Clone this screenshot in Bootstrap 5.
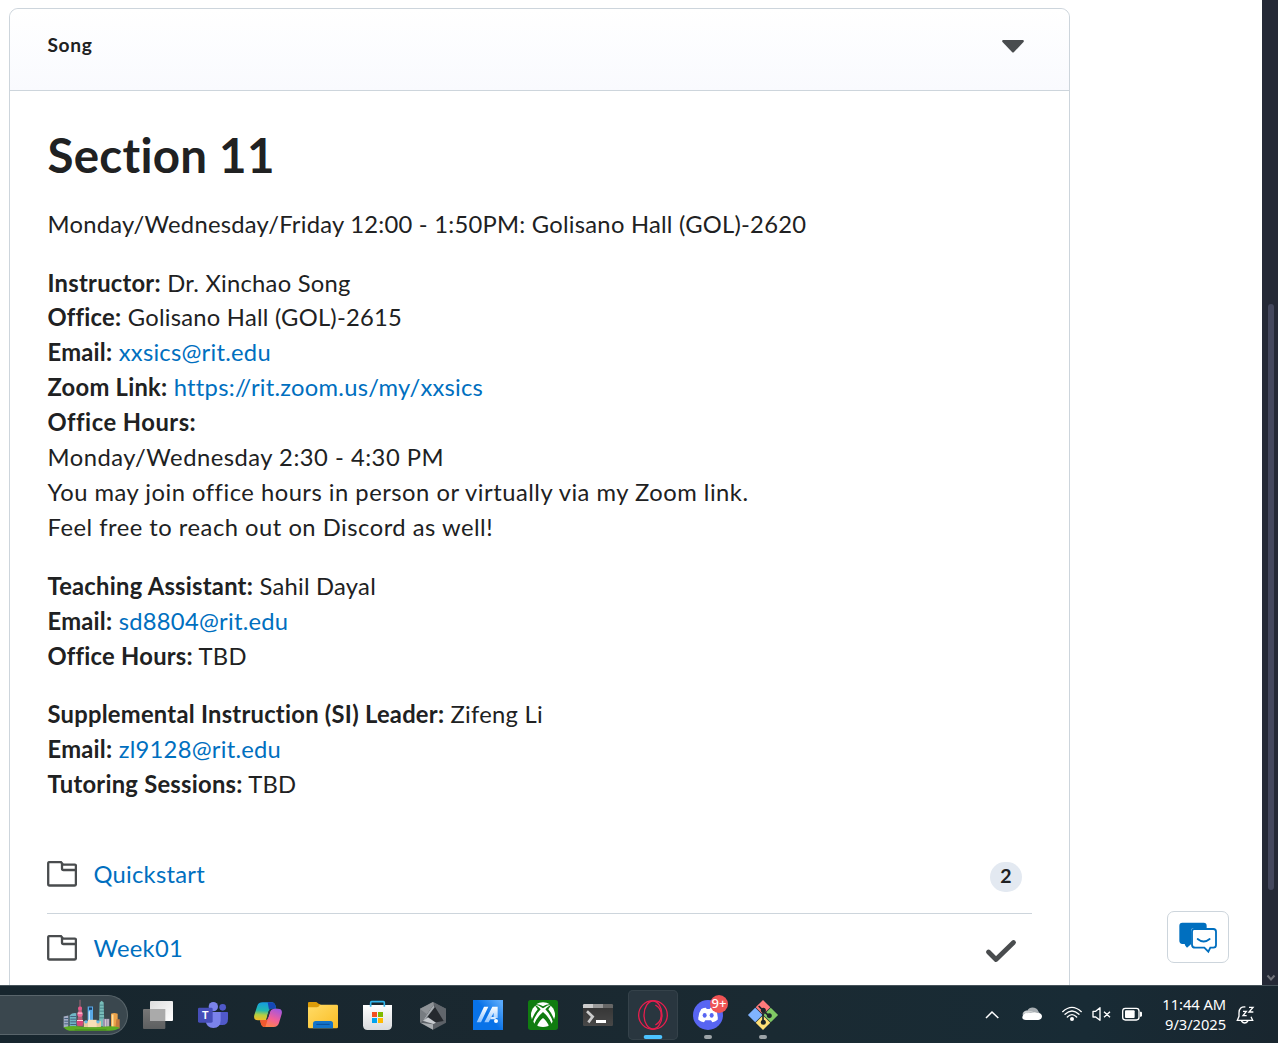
<!DOCTYPE html>
<html lang="en">
<head>
<meta charset="utf-8">
<title>Song - Section 11</title>
<link href="https://cdn.jsdelivr.net/npm/bootstrap@5.3.0/dist/css/bootstrap.min.css" rel="stylesheet">
<style>
body{width:1278px;height:1043px;overflow:hidden;background:#fff;font-family:Lato,"Open Sans",sans-serif;color:#202122}
a{color:#006fbf;text-decoration:none}
svg{display:block;flex:none}
.stage{height:985px;overflow:hidden}
.module{width:1061px;height:1100px;margin:8px 0 0 9px;border:1px solid #cdd5dc;border-radius:9px}
.module-head{height:82px;border-bottom:1px solid #cdd5dc;border-radius:9px 9px 0 0;background:linear-gradient(#fff,#f9fafe);padding:20px 45px 0 37.5px}
.module-title{font-size:19.2px;line-height:32px;font-weight:700;letter-spacing:.6px;margin:0}
.module-body{padding:34.3px 37px 0 37.5px;font-size:23.75px;line-height:34.9px;letter-spacing:.25px}
.module-body h1{font-size:47.5px;line-height:60px;font-weight:700;letter-spacing:.25px;margin:0 0 21.3px}
.module-body p{margin:0 0 24px}
.module-body b{font-weight:700}
.hours{letter-spacing:.505px}
.topics{margin-left:-1px;padding-top:12.8px}
.topic{height:74px;padding:0 10px 4px 0}
.topic+.topic{border-top:1px solid #cdd5dc}
.topic a{margin-left:17px}
.count{width:32px;height:30px;margin-top:6px;border-radius:15px;background:#e3e9f1;font-size:19.5px;font-weight:700;line-height:28px;text-align:center}
.tick{margin:6px 5px 0 0}
.chat{width:62px;height:52px;border:1px solid #cdd5dc;border-radius:7px;margin:0 33px 22px 0;padding-top:2px;background:#fff}
.rail{width:16px;background:#252936;padding-top:304px}
.thumb{width:6px;height:586px;margin-left:6px;border-radius:3px;background:#44475d}
.taskbar{height:58px;background:linear-gradient(90deg,#17262e,#1a2830 40%,#1a2a32 60%,#182b35 85%,#19262f);border-top:1px solid #46535a;color:#fff;font-family:"Noto Sans","Open Sans",sans-serif}
.searchpill{width:128px;height:40px;margin-top:9px;border-radius:0 20px 20px 0;border:1px solid #59656b;border-left:0;background:#3a474e;padding-right:6px}
.apps{gap:5px;margin:4px 0 0 5px}
.tile{width:50px;height:50px;border-radius:5px}
.tile.on{background:#29363f;box-shadow:inset 0 0 0 1px #35424a}
.tray{margin:-2px -10px 0 0}
.clock{width:64px;margin-left:4px;padding-top:8px;font-size:14.7px;line-height:20px;text-align:right;letter-spacing:-.05px;white-space:nowrap}
.bell{margin:-1px 23px 0 9px}
</style>
</head>
<body class="d-flex flex-column">
<main class="stage d-flex">
  <section class="module flex-shrink-0">
    <div class="module-head d-flex justify-content-between">
      <h2 class="module-title">Song</h2>
      <svg width="22" height="13" viewBox="0 0 22 13" style="margin-top:11px"><path d="M1 0H21Q22.5 .5 21.5 2L12 12Q11 13 10 12L.5 2Q-.5 .5 1 0Z" fill="#494c4e"/></svg>
    </div>
    <div class="module-body">
      <h1>Section 11</h1>
      <p>Monday/Wednesday/Friday 12:00 - 1:50PM: Golisano Hall (GOL)-2620</p>
      <p><b>Instructor:</b> Dr. Xinchao Song<br><b>Office:</b> Golisano Hall (GOL)-2615<br><b>Email:</b> <a href="#">xxsics@rit.edu</a><br><b>Zoom Link:</b> <a href="#">https://rit.zoom.us/my/xxsics</a><br><span class="hours"><b>Office Hours:</b><br>Monday/Wednesday 2:30 - 4:30 PM<br>You may join office hours in person or virtually via my Zoom link.<br>Feel free to reach out on Discord as well!</span></p>
      <p><b>Teaching Assistant:</b> Sahil Dayal<br><b>Email:</b> <a href="#">sd8804@rit.edu</a><br><b>Office Hours:</b> TBD</p>
      <p><b>Supplemental Instruction (SI) Leader:</b> Zifeng Li<br><b>Email:</b> <a href="#">zl9128@rit.edu</a><br><b>Tutoring Sessions:</b> TBD</p>
      <div class="topics">
        <div class="topic d-flex align-items-center">
          <svg width="30" height="26" viewBox="0 0 30 26" fill="none" stroke="#494c4e" stroke-width="2.3"><path d="M2 1.2H14L16 3.6H28Q28.9 3.6 28.9 4.6V23Q28.9 24.5 27.5 24.5H2.5Q1.2 24.5 1.2 23V2.2Q1.2 1.2 2 1.2ZM15 3V7.5Q15 9 16.5 9H28.8"/></svg>
          <a href="#">Quickstart</a><span class="count ms-auto">2</span>
        </div>
        <div class="topic d-flex align-items-center">
          <svg width="30" height="26" viewBox="0 0 30 26" fill="none" stroke="#494c4e" stroke-width="2.3"><path d="M2 1.2H14L16 3.6H28Q28.9 3.6 28.9 4.6V23Q28.9 24.5 27.5 24.5H2.5Q1.2 24.5 1.2 23V2.2Q1.2 1.2 2 1.2ZM15 3V7.5Q15 9 16.5 9H28.8"/></svg>
          <a href="#">Week01</a>
          <svg class="tick ms-auto" width="32" height="24" viewBox="0 0 32 24" fill="none" stroke="#494c4e" stroke-width="4.8" stroke-linecap="round" stroke-linejoin="round"><path d="M3.5 13L11 20.5L28.5 3.5"/></svg>
        </div>
      </div>
    </div>
  </section>
  <div class="chat d-flex align-items-center justify-content-center ms-auto align-self-end flex-shrink-0">
    <svg width="38" height="32" viewBox="87 97 114 96"><path d="M97 99H161Q170 99 170 108V115H132Q123 115 123 124V164L111 174L106 168L104 163H97Q88 162 88 153V108Q88 99 97 99Z" fill="#006fbf"/><path d="M132 118H190Q198 118 198 126V166Q198 174 190 174H181L175 186L163 174H136Q126 174 126 165V126Q126 118 132 118Z" fill="#fff" stroke="#006fbf" stroke-width="5.5"/><path d="M143 148Q161 163 179 148" fill="none" stroke="#006fbf" stroke-width="5.5" stroke-linecap="round"/></svg>
  </div>
  <div class="rail d-flex flex-column flex-shrink-0"><div class="thumb"></div>
    <svg width="10" height="8" viewBox="0 0 10 8" style="margin:84px 0 0 4px" fill="none" stroke="#71727a" stroke-width="2"><path d="M1.5 1.5L5 5.5L8.500 1.5"/></svg></div>
</main>
<footer class="taskbar d-flex flex-shrink-0">
  <div class="searchpill d-flex align-items-center justify-content-end flex-shrink-0">
    <svg width="58" height="33" viewBox="190 48 174 98">
      <path d="M192 100L206 97V133H192Z" fill="#a5adc4"/><path d="M210 96Q218 88 230 90V133H210Z" fill="#70b5c4"/><path d="M194 106H206M194 114H206M194 122H206M212 100H229M212 108H229M212 116H229M212 124H229" stroke="#45617f" stroke-width="3"/>
      <path d="M264 70H280V118H264Z" fill="#59a9e8"/><path d="M268 73H277V80H268Z" fill="#173e67"/><path d="M269 84V112" stroke="#c1e4f6" stroke-width="4"/>
      <path d="M300 58L306 53L312 58L314 130H298Z" fill="#78bdb9"/><path d="M300 66H312M300 75H313M299 84H313M299 94H313M299 104H313" stroke="#366c79" stroke-width="2"/>
      <path d="M310 107H329V132H310Z" fill="#9b91b0"/><path d="M318 108V132M325 108V132" stroke="#ded1d5" stroke-width="3"/>
      <path d="M334 92Q343 87 354 92V135H334Z" fill="#eba249"/><path d="M339 94V134" stroke="#ffdf9c" stroke-width="5"/><path d="M350 108H360V136H347Z" fill="#c67a3d"/>
      <path d="M241 50V75" stroke="#a36777" stroke-width="3"/><path d="M237 71H246L250 130H232Z" fill="#ad6174"/><circle cx="241" cy="76" r="6" fill="#e8588b"/><circle cx="241" cy="93" r="8" fill="#f0679a"/><circle cx="241" cy="118" r="10" fill="#d84779"/><path d="M232 112H250M234 90H248" stroke="#ffd3da" stroke-width="3"/>
      <path d="M252 114H304V133H252Z" fill="#e9c99f"/><path d="M265 110H291V132H265Z" fill="#f8dfb8"/><circle cx="259" cy="116" r="5" fill="#62bbe8"/><circle cx="295" cy="116" r="5" fill="#62bbe8"/>
      <path d="M192 132Q220 125 247 131Q278 134 305 131Q337 126 360 133Q350 143 328 143H218Q199 143 192 132Z" fill="#5cad23"/><path d="M225 140H320" stroke="#397e1b" stroke-width="2"/>
    </svg>
  </div>
  <div class="apps d-flex">
    <svg class="tile" viewBox="0 0 150 150"><defs><linearGradient id="tg" x2="0" y2="1"><stop stop-color="#777"/><stop offset="1" stop-color="#5d5f60"/></linearGradient><linearGradient id="tw" x2="1" y2="1"><stop stop-color="#ddd"/><stop offset="1" stop-color="#fff"/></linearGradient></defs><rect x="30" y="57" width="67" height="60" rx="3" fill="url(#tg)"/><rect x="51" y="33" width="69" height="60" rx="3" fill="url(#tw)"/><path d="M51 57H97V93H51Z" fill="#aaa"/></svg>
    <svg class="tile" viewBox="0 0 150 150"><circle cx="76" cy="50" r="14" fill="#7b83eb"/><circle cx="104" cy="52" r="10" fill="#5059c9"/><path d="M82 66H118Q120 66 120 69V87Q120 106 101 105H82Z" fill="#5059c9"/><path d="M53 66H98V91Q98 114 76 114Q56 114 53 94Z" fill="#7b83eb"/><rect x="30" y="53" width="44" height="45" rx="4" fill="#464eb8"/><text x="52" y="87" text-anchor="middle" font-family="Liberation Sans" font-weight="700" font-size="32" fill="#fff">T</text></svg>
    <svg class="tile" viewBox="0 0 150 150"><defs><linearGradient id="ca" x1=".4" x2=".3" y2="1"><stop stop-color="#169be0"/><stop offset=".45" stop-color="#22b9ae"/><stop offset=".7" stop-color="#b4cf42"/><stop offset="1" stop-color="#f4bd26"/></linearGradient><linearGradient id="cb" x1=".7" x2=".2" y2="1"><stop stop-color="#a657dc"/><stop offset=".5" stop-color="#f25f99"/><stop offset="1" stop-color="#ff8b39"/></linearGradient></defs><path d="M59 37H86Q94 37 97 46L100 56H87Q79 56 76 66L70 91H45Q30 91 34 75L43 47Q47 37 59 37Z" fill="url(#ca)"/><path d="M74 37H86Q94 37 97 46L100 56H87Q79 56 78 59Z" fill="#1747b5"/><path d="M95 56H104Q120 56 116 72L108 99Q104 111 92 111H66Q57 111 54 101L51 91H65Q73 91 76 81L82 63Q85 56 95 56Z" fill="url(#cb)"/><path d="M51 91H65Q73 91 75 85L67 111Q57 111 54 101Z" fill="#ef592f"/><path d="M76 66Q79 56 87 56H96Q85 56 82 63L76 81Q73 91 69 91Z" fill="#263646"/></svg>
    <svg class="tile" viewBox="0 0 150 150"><defs><linearGradient id="ef" x2="1" y2="1"><stop stop-color="#ffdc68"/><stop offset="1" stop-color="#fbbd24"/></linearGradient></defs><path d="M33 36H55L63 42H67V65H30V40Q30 36 33 36Z" fill="#db9c09"/><path d="M30 52H57Q62 52 65 46L67 44H116Q120 44 120 48V111Q120 115 116 115H34Q30 115 30 111Z" fill="url(#ef)"/><path d="M45 115V101Q45 93 53 93H98Q105 93 105 101V115Z" fill="#1474c9"/><path d="M55 103H95" stroke="#0a4c95" stroke-width="3"/></svg>
    <svg class="tile" viewBox="0 0 150 150"><defs><linearGradient id="sw" x2="0" y2="1"><stop stop-color="#fff"/><stop offset="1" stop-color="#d9dbdd"/></linearGradient></defs><path d="M30 45H117V106Q117 120 103 120H44Q30 120 30 106Z" fill="url(#sw)"/><path d="M53 50V38Q53 35 56 35H91Q94 35 94 38V50" fill="none" stroke="#31b6ed" stroke-width="5"/><path d="M57 66H72V81H57Z" fill="#f25022"/><path d="M75 66H90V81H75Z" fill="#7fba00"/><path d="M57 84H72V99H57Z" fill="#00a4ef"/><path d="M75 84H90V99H75Z" fill="#ffb900"/></svg>
    <svg class="tile" viewBox="0 0 150 150"><path d="M75 36L114 56V98L75 119L36 98V56Z" fill="#5c6167"/><path d="M75 36L114 56V88L106 92L77 44Z" fill="#61666c"/><path d="M36 56L75 36L78 43L43 94Z" fill="#8f9397"/><path d="M36 57L56 72L40 97L36 96Z" fill="#777c81"/><path d="M77 44L107 93L76 98L44 92Z" fill="#25292e"/><path d="M44 92L60 82L84 98L76 102Z" fill="#c7cbcf"/><path d="M77 44L72 51L44 92L50 91L80 52Z" fill="#a4a9ae"/><path d="M38 98L75 103V119Z" fill="#a8adb1"/></svg>
    <svg class="tile" viewBox="0 0 150 150"><defs><linearGradient id="ar" x1="0" x2="1" y2=".2" y1="1"><stop offset=".55" stop-color="#0872e8"/><stop offset="1" stop-color="#58a8fa"/></linearGradient><linearGradient id="as" x2="0" y2="1"><stop stop-color="#fff"/><stop offset="1" stop-color="#8cc2ff"/></linearGradient></defs><path d="M30 30H120V120H30Z" fill="url(#ar)"/><path d="M63 50H76L54 97H41ZM88 50H104V84H92V68L77 97H64Z" fill="url(#as)"/><path d="M85 81H98V88H81Z" fill="#d8ebff"/><circle cx="99" cy="93" r="6" fill="#fff"/></svg>
    <svg class="tile" viewBox="0 0 150 150"><rect x="30" y="30" width="90" height="90" rx="8" fill="#107c10"/><circle cx="75" cy="75" r="36" fill="#fff"/><path d="M51 45Q61 44 75 55Q89 44 99 45L92 38H58ZM75 66Q58 80 49 101L56 110Q64 92 75 84Q86 92 94 110L101 101Q92 80 75 66ZM50 45Q57 46 68 58Q50 76 45 98L39 96Q46 73 59 58ZM100 45Q93 46 82 58Q100 76 105 98L111 96Q104 73 91 58Z" fill="#107c10"/><path d="M54 43Q64 42 75 49Q86 42 96 43Q86 37 75 37Q64 37 54 43Z" fill="#fff"/></svg>
    <svg class="tile" viewBox="0 0 150 150"><defs><linearGradient id="tm" x2="0" y2="1"><stop stop-color="#333"/><stop offset="1" stop-color="#484848"/></linearGradient></defs><rect x="30" y="42" width="90" height="66" rx="4" fill="url(#tm)"/><path d="M34 42H60V54H30V46Q30 42 34 42Z" fill="#ccc"/><path d="M60 42H90V54H60Z" fill="#999"/><path d="M90 42H116Q120 42 120 46V54H90Z" fill="#666"/><path d="M42 64L59 80L46 97" fill="none" stroke="#ccc" stroke-width="8"/><path d="M69 90H99V99H69Z" fill="#fff"/></svg>
    <svg class="tile on" viewBox="0 0 150 150"><g fill="none" stroke="#e61e4d" stroke-width="4"><circle cx="75" cy="75" r="43"/><ellipse cx="75" cy="75" rx="27" ry="42"/><path d="M82 45C105 57 106 92 82 105"/></g><rect x="47" y="135" width="56" height="12" rx="6" fill="#4cc2ff"/></svg>
    <svg class="tile" viewBox="0 0 150 150"><circle cx="75" cy="75" r="45" fill="#5865f2"/><path d="M55 57Q62 53 69 53L71 57H80L82 53Q91 54 98 58Q106 74 104 89Q96 96 88 97L84 91H67L63 97Q54 96 46 89Q45 70 55 57Z" fill="#fff"/><ellipse cx="65" cy="76" rx="6" ry="7" fill="#5865f2"/><ellipse cx="86" cy="76" rx="6" ry="7" fill="#5865f2"/><circle cx="108" cy="42" r="27" fill="#f05455"/><text x="108" y="55" text-anchor="middle" font-family="Noto Sans" font-weight="500" font-size="39" fill="#fff">9+</text><rect x="63" y="135" width="24" height="12" rx="6" fill="#9ca3a7"/></svg>
    <svg class="tile" viewBox="0 0 150 150"><g transform="translate(75 75) rotate(45)"><path d="M-32-32H-1V-1H-32Z" fill="#ff7a7b"/><path d="M1-32H32V-1H1Z" fill="#80c964"/><path d="M-32 1H-1V32H-32Z" fill="#80b3ff"/><path d="M1 1H32V32H1Z" fill="#ffdf76"/></g><path d="M62 48L75 61V99M76 62L91 76" stroke="#1c252b" stroke-width="5" fill="none"/><circle cx="76" cy="61" r="7.500" fill="#1c252b"/><circle cx="94" cy="77" r="7.500" fill="#1c252b"/><circle cx="76" cy="97" r="7.500" fill="#1c252b"/><rect x="63" y="135" width="24" height="12" rx="6" fill="#9ca3a7"/></svg>
  </div>
  <div class="d-flex ms-auto">
    <svg class="tray" width="186" height="58" viewBox="66 0 558 174">
      <path d="M78 102L96 84L115 102" fill="none" stroke="#fff" stroke-width="4.5"/>
      <path d="M191 99C181 85 198 78 202 80C209 65 232 70 235 82L243 94Z" fill="#a9afb3"/><path d="M198 108H235Q246 107 246 96Q244 86 232 87Q222 82 212 87Q199 83 190 92Q181 107 198 108Z" fill="#fff"/><path d="M202 80Q216 79 224 86Q211 82 203 88Q194 85 190 91Q190 80 202 80Z" fill="#cdd1d3"/>
      <g fill="none" stroke="#fff" stroke-width="4" stroke-linecap="round"><path d="M308 83Q336 57 364 83M315 91Q336 71 357 91M322 99Q336 85 350 99"/></g><circle cx="336" cy="105" r="6" fill="#fff"/>
      <path d="M399 82H407L420 71V109L407 99H399ZM432 83L450 100M450 83L432 100" fill="none" stroke="#fff" stroke-width="4" stroke-linejoin="round"/>
      <rect x="488" y="73" width="49" height="35" rx="8" fill="none" stroke="#fff" stroke-width="4"/><rect x="495" y="79" width="29" height="23" rx="3" fill="#fff"/><path d="M540 83H543Q546 83 546 87V94Q546 98 543 98H540Z" fill="#fff"/>
    </svg>
    <div class="clock">11:44 AM<br>9/3/2025</div>
    <svg class="bell" width="20" height="58" viewBox="826 0 60 174" fill="none" stroke="#fff" stroke-width="4"><path d="M857 66Q839 64 838 83V94L833 106H879L874 95M845 108Q855 120 865 108"/><path d="M850 79H860L850 92H861M868 67H880L868 81H881"/></svg>
  </div>
</footer>
<script src="https://cdn.jsdelivr.net/npm/bootstrap@5.3.0/dist/js/bootstrap.bundle.min.js"></script>
</body>
</html>
